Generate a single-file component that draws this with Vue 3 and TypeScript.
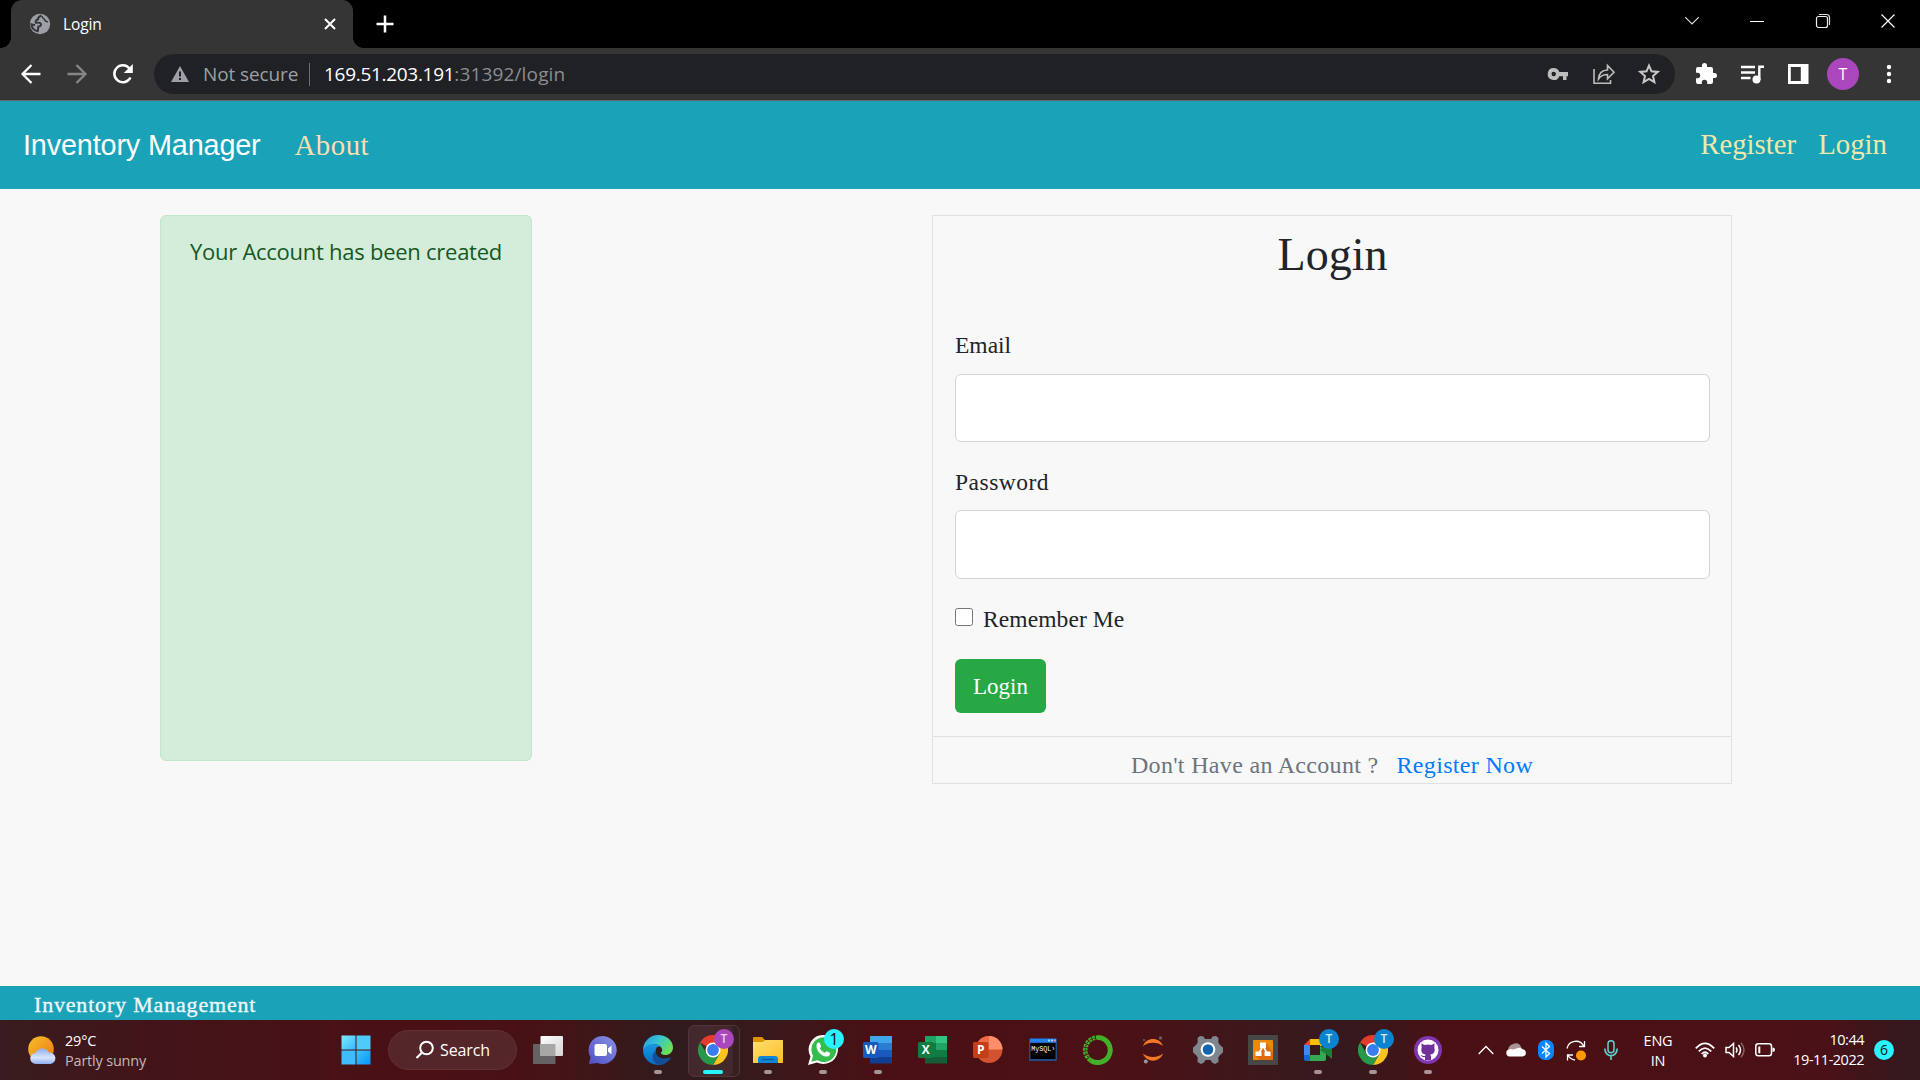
<script setup lang="ts">
import { ref } from 'vue'

interface App {
  name: string
  running?: boolean
  active?: boolean
}

const email = ref('')
const password = ref('')
const remember = ref(false)

const apps: App[] = [
  { name: 'taskview' },
  { name: 'chat' },
  { name: 'edge', running: true },
  { name: 'chrome', active: true },
  { name: 'folder', running: true },
  { name: 'whatsapp', running: true },
  { name: 'word', running: true },
  { name: 'excel' },
  { name: 'powerpoint' },
  { name: 'mysql' },
  { name: 'anaconda' },
  { name: 'jupyter' },
  { name: 'settings' },
  { name: 'drawio' },
  { name: 'meet', running: true },
  { name: 'chrome2', running: true },
  { name: 'github', running: true },
]
</script>

<template>
  <div class="screen">
    <header class="tabs">
      <div class="tab">
        <svg class="globe" width="22" height="22" viewBox="0 0 22 22">
          <circle cx="11" cy="11" r="10.2" fill="#9aa0a6" />
          <path d="M12.500 2.500L8.500 4.500 8 7 5.500 7.500 5 10.200h4.500l2 1.800-.5 2.300-3 .5-.3 4.200C4.500 18 2.300 14.800 2.300 11L5 10.200l.5-2.700L8 7l.5-2.500zM13 2.300c4 .6 6.700 4 6.800 8l-2.600-.6-2.200.3-1.500-1.800.8-1.700-2-1.400zM14 19.300l.3-2.600 2-1.500.2-2.300 3-.3c-.6 3.200-2.500 5.600-5.500 6.700z" fill="#353535" fill-opacity=".0" />
          <path d="M12.500 2.500c-2 .8-3.800 1.800-3.600 4-1.800.3-2.500 1.500-2.100 3.200 2.500-.2 5-.2 5.200 1.500.2 1.600-1 2.200-2.700 2.400-.2 1.600-.2 3-.6 4.600C5 17.500 2.600 15 2.400 11.300l3.600 1" fill="none" stroke="#353535" stroke-width="2" />
          <path d="M13 3c.2 2 1 2.700 2.300 3.200.4 1.700 1.300 2.600 3.600 2.500" fill="none" stroke="#353535" stroke-width="1.500" />
        </svg>
        <span class="tab-title">Login</span>
        <svg width="12" height="12" viewBox="0 0 12 12"><path d="M1 1l10 10M11 1L1 11" stroke="#fff" stroke-width="2" /></svg>
      </div>
      <svg class="plus" width="18" height="18" viewBox="0 0 18 18"><path d="M9 .5v17M.5 9h17" stroke="#fff" stroke-width="2.500" /></svg>
      <div class="window-buttons">
        <svg width="16" height="16" viewBox="0 0 16 16"><path d="M1.200 4.200L8 11l6.800-6.800" fill="none" stroke="#ddd" stroke-width="1.200" /></svg>
        <svg width="16" height="16" viewBox="0 0 16 16"><path d="M1 8.500h14" stroke="#fff" /></svg>
        <svg width="16" height="16" viewBox="0 0 16 16"><rect x="1.500" y="3.500" width="11" height="11" rx="2" fill="none" stroke="#eee" stroke-width="1.200" /><path d="M4 1.500h7.500q3 0 3 3V12" fill="none" stroke="#ddd" stroke-width="1.200" /></svg>
        <svg width="16" height="16" viewBox="0 0 16 16"><path d="M1.500 1.500l13 13m0-13l-13 13" stroke="#fff" stroke-width="1.200" /></svg>
      </div>
    </header>

    <div class="toolbar">
      <svg class="nav-icon" width="22" height="22" viewBox="0 0 22 22"><path d="M20.500 11H3M11.500 2l-9 9 9 9" fill="none" stroke="#fff" stroke-width="2.300" /></svg>
      <svg class="nav-icon" width="22" height="22" viewBox="0 0 22 22"><path d="M1.500 11H19M10.500 2l9 9-9 9" fill="none" stroke="#868686" stroke-width="2.300" /></svg>
      <svg class="nav-icon" width="22" height="22" viewBox="0 0 22 22"><path d="M18.500 14.500A8.500 8.500 0 1 1 17.500 5.500" fill="none" stroke="#fff" stroke-width="2.500" /><path d="M20.800 1v9h-9z" fill="#fff" /></svg>
      <div class="address">
        <svg class="warn" width="18" height="16" viewBox="0 0 18 16"><path d="M9 0l9 16H0z" fill="#9aa0a6" /><path d="M9 5.500v5M9 12v2" stroke="#202124" stroke-width="2" /></svg>
        <span class="insecure">Not secure</span>
        <i class="bar"></i>
        <span class="url"><b>169.51.203.191</b>:31392/login</span>
        <div class="address-icons">
          <svg width="22" height="22" viewBox="0 0 22 22"><path fill-rule="evenodd" d="M6.700 5a6 6 0 1 0 5.600 8.200H16V17h3.500v-3.800H21V9h-8.700A6 6 0 0 0 6.700 5zm0 3.800a2.200 2.200 0 1 1 0 4.400 2.200 2.200 0 0 1 0-4.400z" fill="#bdbdbd" /></svg>
          <svg width="24" height="22" viewBox="0 0 24 22"><path d="M2 6v14.200h16.500V17M6.500 16c.4-5.800 3.300-8.800 9-9V2.500l6.500 6.700-6.500 6.500v-4.200c-4 0-6.800 1.300-9 4.500z" fill="none" stroke="#bdbdbd" stroke-width="1.600" /></svg>
          <svg width="22" height="22" viewBox="0 0 22 22"><path d="M11 2.600l2.500 5.700 6.200.6-4.700 4.100 1.400 6.100L11 15.900l-5.400 3.200L7 13 2.300 8.900l6.200-.6z" fill="none" stroke="#c7c7c7" stroke-width="2" /></svg>
        </div>
      </div>
      <div class="extensions">
        <svg width="24" height="24" viewBox="0 0 24 24"><path fill="#fff" d="M20.500 11H19V7a2 2 0 0 0-2-2h-4V3.500a2.500 2.500 0 0 0-5 0V5H4a2 2 0 0 0-2 2v3.800h1.500a2.700 2.700 0 0 1 0 5.400H2V20a2 2 0 0 0 2 2h3.800v-1.500a2.700 2.700 0 0 1 5.400 0V22H17a2 2 0 0 0 2-2v-4h1.500a2.500 2.500 0 0 0 0-5z" /></svg>
        <svg width="24" height="24" viewBox="0 0 24 24"><path d="M1 5h14M1 10.500h14M1 16h9.500" stroke="#fff" stroke-width="2.300" /><circle cx="16.500" cy="17.500" r="4" fill="#fff" /><path d="M19.300 18V4.700h4.700" fill="none" stroke="#fff" stroke-width="2.400" /></svg>
        <svg width="24" height="24" viewBox="0 0 24 24"><path fill-rule="evenodd" fill="#fff" d="M2 2h20.500v20H2zM4.800 5v14h10V5z" /></svg>
        <span class="avatar">T</span>
        <svg class="dots" width="8" height="22" viewBox="0 0 8 22"><g fill="#fff"><circle cx="4" cy="4" r="2.200" /><circle cx="4" cy="11" r="2.200" /><circle cx="4" cy="18" r="2.200" /></g></svg>
      </div>
    </div>

    <nav class="navbar">
      <span class="brand">Inventory Manager</span>
      <a class="about">About</a>
      <a class="nav-link">Register</a>
      <a class="nav-link">Login</a>
    </nav>

    <main class="page">
      <div class="alert"><span>Your Account has been created</span></div>
      <section class="card">
        <form class="form" @submit.prevent>
          <h1>Login</h1>
          <label class="label email">Email</label>
          <input v-model="email" class="field" type="text" />
          <label class="label password">Password</label>
          <input v-model="password" class="field tall" type="password" />
          <label class="remember"><input v-model="remember" type="checkbox" /><span>Remember Me</span></label>
          <button class="submit">Login</button>
        </form>
        <div class="card-foot"><span>Don't Have an Account ?</span><a>Register Now</a></div>
      </section>
    </main>

    <footer class="footer"><span>Inventory Management</span></footer>

    <div class="taskbar">
      <div class="weather">
        <svg width="30" height="30" viewBox="0 0 30 30">
          <defs>
            <linearGradient id="sun" x1="0" y1="0" x2="1" y2="1"><stop stop-color="#f6c02c" /><stop offset="1" stop-color="#f0760f" /></linearGradient>
            <linearGradient id="cloud" x1="0" y1="0" x2="0" y2="1"><stop stop-color="#8fb0ee" /><stop offset=".6" stop-color="#d9e5fb" /><stop offset="1" stop-color="#8eaef0" /></linearGradient>
          </defs>
          <circle cx="14" cy="14" r="12.800" fill="url(#sun)" />
          <path d="M9 29a5.500 5.500 0 0 1-.5-11A7.500 7.500 0 0 1 22 17.500 5.800 5.800 0 0 1 23.500 29z" fill="url(#cloud)" />
        </svg>
        <div class="weather-text"><span>29°C</span><span class="dim">Partly sunny</span></div>
      </div>
      <svg class="start" width="30" height="30" viewBox="0 0 30 30">
        <defs><linearGradient id="win" x1="0" y1="0" x2="1" y2="1" gradientUnits="objectBoundingBox"><stop stop-color="#7ceaff" /><stop offset="1" stop-color="#39b8fb" /></linearGradient>
          <linearGradient id="win2" x1="0" y1="0" x2="1" y2="1"><stop stop-color="#3dc3fc" /><stop offset="1" stop-color="#0795fb" /></linearGradient></defs>
        <rect x=".5" y=".5" width="14" height="14" fill="url(#win)" /><rect x="15.500" y=".5" width="14" height="14" fill="#4ecbfb" />
        <rect x=".5" y="15.500" width="14" height="14" fill="#3fbdfb" /><rect x="15.500" y="15.500" width="14" height="14" fill="url(#win2)" />
      </svg>
      <div class="search">
        <svg width="20" height="20" viewBox="0 0 20 20"><circle cx="11.500" cy="8" r="6.300" fill="none" stroke="#fff" stroke-width="2" /><path d="M7 12.500l-5.500 5.500" stroke="#fff" stroke-width="2.200" /></svg>
        <span>Search</span>
      </div>

      <div class="apps">
        <div v-for="app in apps" :key="app.name" class="app" :class="{ active: app.active }">
          <svg v-if="app.name === 'taskview'" width="30" height="30" viewBox="0 0 30 30">
            <defs><linearGradient id="tv" x1="0" y1="0" x2="1" y2="1"><stop stop-color="#fff" /><stop offset="1" stop-color="#d5d2d2" /></linearGradient></defs>
            <rect y="9" width="22.500" height="20" rx="1" fill="#656263" /><rect x="7.500" y="1" width="22.500" height="20" rx="1" fill="url(#tv)" /><rect x="7.500" y="9" width="15" height="12" fill="#a9a6a6" />
          </svg>
          <svg v-else-if="app.name === 'chat'" width="30" height="30" viewBox="0 0 30 30">
            <defs><linearGradient id="ch" x1="1" y1="0" x2="0" y2="1"><stop stop-color="#8a92e6" /><stop offset="1" stop-color="#4f4fc4" /></linearGradient></defs>
            <path d="M15 1a14 14 0 1 1-5.500 27L1 29l1.500-7A14 14 0 0 1 15 1z" fill="url(#ch)" />
            <rect x="6.500" y="9" width="12.500" height="12" rx="2" fill="#fff" /><path d="M20 13.500l3.500-3v9l-3.500-3z" fill="#fff" />
          </svg>
          <svg v-else-if="app.name === 'edge'" width="30" height="30" viewBox="0 0 30 30">
            <defs>
              <linearGradient id="e1" x1="0" y1="0" x2="1" y2=".5"><stop stop-color="#2693e0" /><stop offset=".5" stop-color="#36c4d5" /><stop offset="1" stop-color="#6bdf55" /></linearGradient>
              <linearGradient id="e2" x1="0" y1="0" x2="0" y2="1"><stop stop-color="#1897e4" /><stop offset="1" stop-color="#0a69c4" /></linearGradient>
            </defs>
            <path d="M0 15A15 15 0 0 1 15 0c9 0 15 6 15 12.500 0 5-4 7.500-7.500 7.500-3 0-5-1-4.500-2.500 1-1 1.500-2 1-3.500C17 8 6 7 0 15z" fill="url(#e1)" />
            <path d="M0 15C4 7 15 8 18 12c-3-1.500-5.500.5-5.500 4 0 6 6.500 10 15.500 6.500C25 27 20.500 30 15 30A15 15 0 0 1 0 15z" fill="url(#e2)" />
            <path d="M12.500 16c0 6 6.500 10 15.500 6.500C25 27 20.500 30 16 30 9 28 7.500 19 12.500 16z" fill="#124f9b" />
          </svg>
          <svg v-else-if="app.name.startsWith('chrome')" width="30" height="30" viewBox="0 0 30 30">
            <path d="M15 15L2 7.500A15 15 0 0 1 28 7.500z" fill="#e33b2e" /><path d="M15 7.500h13A15 15 0 0 1 15 30l6.500-11.200z" fill="#fcc31e" />
            <path d="M2 7.500l6.500 11.300h13L15 30A15 15 0 0 1 2 7.500z" fill="#28994a" /><circle cx="15" cy="15" r="7.500" fill="#fff" /><circle cx="15" cy="15" r="5.900" fill="#3a7df0" />
          </svg>
          <svg v-else-if="app.name === 'folder'" width="30" height="30" viewBox="0 0 30 30">
            <defs><linearGradient id="fo" x1="0" y1="0" x2="1" y2="1"><stop stop-color="#ffdf75" /><stop offset="1" stop-color="#fdbe1d" /></linearGradient></defs>
            <path d="M0 3q0-1 1-1h8l3 3h17q1 0 1 1v8H0z" fill="#dc9605" /><path d="M0 7h9.500l3-2H29q1 0 1 1v22H0z" fill="url(#fo)" />
            <path d="M5 28v-4q0-3 3-3h14q3 0 3 3v4z" fill="#1285d4" /><path d="M9 24.500h12" stroke="#075ca0" stroke-width="1.300" />
          </svg>
          <svg v-else-if="app.name === 'whatsapp'" width="30" height="30" viewBox="0 0 30 30">
            <path d="M15.500 0A14.500 14.500 0 1 1 9 27.500L0 30l2.500-8.500A14.500 14.500 0 0 1 15.500 0z" fill="#fff" />
            <path d="M15.500 2.200a12.400 12.400 0 1 1-6 23L3.300 26.800 5 20.800A12.400 12.400 0 0 1 15.500 2.200z" fill="#34bd4c" />
            <path d="M9 8.500c1-1.500 2.500-1.500 3 0l1 2.700c0 1-1 1.400-1.200 2.100 1.200 2.200 2.800 3.600 5 4.500.7-.3 1.200-1.600 2-1.600l3 1.500c1 .8 0 3-1.500 3.500-6 2-14-6.500-11.300-12.700z" fill="#fff" />
          </svg>
          <svg v-else-if="app.name === 'word'" width="30" height="30" viewBox="0 0 30 30">
            <path d="M7 1h22v7H7z" fill="#41a5ee" /><path d="M7 8h22v7H7z" fill="#2b7cd3" /><path d="M7 15h22v7H7z" fill="#185abd" /><path d="M7 22h22v6.500H7z" fill="#103f91" />
            <rect y="7" width="15.500" height="16" rx="1.500" fill="#185abd" /><text x="7.700" y="19" text-anchor="middle" class="letter">W</text>
          </svg>
          <svg v-else-if="app.name === 'excel'" width="30" height="30" viewBox="0 0 30 30">
            <path d="M7 1h11v7H7z" fill="#21a366" /><path d="M18 1h11v7H18z" fill="#33c481" /><path d="M7 8h11v7H7z" fill="#107c41" /><path d="M18 8h11v7H18z" fill="#21a366" /><path d="M7 15h22v7H7z" fill="#107c41" /><path d="M7 22h22v6.500H7z" fill="#185c37" />
            <rect y="7" width="15.500" height="16" rx="1.500" fill="#107c41" /><text x="7.700" y="19.300" text-anchor="middle" class="letter">X</text>
          </svg>
          <svg v-else-if="app.name === 'powerpoint'" width="30" height="30" viewBox="0 0 30 30">
            <circle cx="16" cy="14.500" r="13.500" fill="#d35230" /><path d="M2.500 14.500A13.500 13.500 0 0 1 16 1v13.500z" fill="#ed6c47" /><path d="M16 1a13.500 13.500 0 0 1 13.500 13.500H16z" fill="#ff8f6b" />
            <rect y="7" width="15.500" height="16" rx="1.500" fill="#c43e1c" /><text x="7.700" y="19.300" text-anchor="middle" class="letter">P</text>
          </svg>
          <svg v-else-if="app.name === 'mysql'" width="30" height="30" viewBox="0 0 30 30">
            <rect x="1" y="3" width="28" height="23" rx="1.500" fill="#234b85" /><path d="M2 4h26v3.500H2z" fill="#2482ed" /><path d="M20 4.500h2v2h-2zM23 4.500h2v2h-2z" fill="#a9d2fa" /><path d="M26 4.500h2v2h-2z" fill="#e98873" /><path d="M2.500 8h25v16h-25z" fill="#020202" />
            <text x="3.200" y="15.500" class="console" textLength="24" lengthAdjust="spacingAndGlyphs">MySQL›</text>
          </svg>
          <svg v-else-if="app.name === 'anaconda'" width="30" height="30" viewBox="0 0 30 30">
            <path d="M15 2.500a12.500 12.500 0 1 1-7.500 22.700" fill="none" stroke="#43b02a" stroke-width="5" />
            <path d="M7.500 25.200A12.500 12.500 0 0 1 15 2.500" fill="none" stroke="#43b02a" stroke-width="4.500" stroke-dasharray="2.800 .9" />
            <path d="M5.500 22.500A11.500 11.500 0 0 1 13 3" fill="none" stroke="#4a1116" stroke-width="1" stroke-dasharray="1.700 2.200" />
          </svg>
          <svg v-else-if="app.name === 'jupyter'" width="30" height="30" viewBox="0 0 30 30">
            <path d="M5 11C8 1.500 22 1.500 25 11 20 6.500 10 6.500 5 11zM5 18.500c3 9.500 17 9.500 20 0-5 4.500-15 4.500-20 0z" fill="#f37726" /><circle cx="22.500" cy="3" r="1.700" fill="#6c5d5e" /><circle cx="6" cy="5" r="1.100" fill="#6c5d5e" /><circle cx="7.800" cy="26.500" r="2" fill="#989798" />
          </svg>
          <svg v-else-if="app.name === 'settings'" width="30" height="30" viewBox="0 0 30 30">
            <path d="M7 1l3.500.5L12 4h6l1.500-2.500L23 1l2.500 2-.2 4.500L27 10l3 2.500v5L27 20l-1.700 2.500.2 4.500-3.500 2-3-1.500L17.500 25h-5L11 27.500 8 29l-3.500-2 .2-4.500L3 20l-3-2.500v-5L3 10l1.700-2.500L4.500 3z" fill="#7f868e" />
            <circle cx="15" cy="14.500" r="7.300" fill="#fff" /><circle cx="15" cy="14.500" r="5.300" fill="#1464ad" />
          </svg>
          <svg v-else-if="app.name === 'drawio'" width="30" height="30" viewBox="0 0 30 30">
            <path d="M0 0h30v30H0z" fill="#474747" /><rect x="5" y="5" width="20" height="20" rx="1" fill="#f08705" /><path d="M18 8l7 9v8H12l-4-4z" fill="#df6c0c" />
            <path d="M15 11l-4.500 8M15 11l4.500 8" stroke="#fff" stroke-width="1.600" /><path d="M12 7.500h6v5.500h-6zM7.500 16.500h6V21h-6zM16.500 16.500h6V21h-6z" fill="#fff" />
          </svg>
          <svg v-else-if="app.name === 'meet'" width="30" height="30" viewBox="0 0 30 30">
            <path d="M7 4h14q2 0 2 2v5h-6v-1H7z" fill="#fbbc04" /><path d="M7 4v6H1z" fill="#ea4335" /><path d="M1 10h6v10H1z" fill="#4285f4" /><path d="M1 20h6v6H3q-2 0-2-2z" fill="#1967d2" /><path d="M7 20h10v-9l6 4v9q0 2-2 2H7z" fill="#34a853" /><path d="M17 15l7-6 5-3v18l-6-5z" fill="#188038" />
          </svg>
          <svg v-else width="30" height="30" viewBox="0 0 30 30">
            <circle cx="15" cy="15" r="14" fill="#8136ad" /><circle cx="15" cy="15" r="10.500" fill="#fff" />
            <path d="M12 25v-3c-3 .8-3.500-1.500-4.500-2 1.500-.3 2 1.500 4.500 1l.7-1.500C8.500 19 7.700 16 8.700 12.500l-.3-4 3.400 1.500q3.200-.8 6.400 0l3.400-1.500-.3 4c1 3.500.2 6.500-4 7l.8 2V25z" fill="#70309a" />
          </svg>
          <span v-if="app.name === 'chrome'" class="badge purple">T</span>
          <span v-else-if="app.name === 'meet' || app.name === 'chrome2'" class="badge blue">T</span>
          <span v-else-if="app.name === 'whatsapp'" class="badge cyan">1</span>
          <i v-if="app.running || app.active" class="indicator"></i>
        </div>
      </div>

      <div class="tray">
        <svg class="caret" width="16" height="10" viewBox="0 0 16 10"><path d="M.7 9L8 1.500 15.300 9" fill="none" stroke="#fff" stroke-width="1.300" /></svg>
        <svg class="onedrive" width="20" height="14" viewBox="0 0 20 14"><path d="M3 10a6 6 0 0 1 4-9c4-2 7 0 8 3l2 3z" fill="#a99395" /><path d="M3.500 13.500A3.500 3.500 0 0 1 3 6.600q2-1 4 0l5-1.500q2-1 4 1 4 .5 4 4-.4 3.200-3.500 3.400z" fill="#fff" /></svg>
        <svg class="bluetooth" width="16" height="20" viewBox="0 0 16 20"><rect width="16" height="20" rx="7" fill="#0a84ff" /><path d="M4 6.500l7.500 7L8 17V3l3.500 3.500-7.500 7" fill="none" stroke="#fff" stroke-width="1.300" /></svg>
        <svg class="sync" width="21" height="21" viewBox="0 0 21 21"><path d="M1 8.500A9 9 0 0 1 18 6.500M18.500 1v5.500H13M9 20c-3-.4-5.500-2-7-4.500M1.500 20.500V15h5.500" fill="none" stroke="#fff" stroke-width="1.300" /><circle cx="15" cy="15.500" r="5" fill="#ff9800" /></svg>
        <svg class="mic" width="14" height="20" viewBox="0 0 14 20"><rect x="4" y=".8" width="6" height="12" rx="3" fill="none" stroke="#63d2cf" stroke-width="1.500" /><path d="M.8 8.500c0 9.500 12.400 9.500 12.400 0M7 15.500V20" fill="none" stroke="#63d2cf" stroke-width="1.600" /></svg>
        <div class="lang"><span>ENG</span><span>IN</span></div>
        <svg class="wifi" width="20" height="16" viewBox="0 0 20 16"><g fill="none" stroke="#fff" stroke-width="1.800"><path d="M.8 6.300q9.200-10 18.400 0M3.800 9.300q6.200-6.500 12.400 0M6.700 12q3.300-3.500 6.600 0" /></g><circle cx="10" cy="13.500" r="2" fill="#fff" /></svg>
        <svg class="volume" width="20" height="16" viewBox="0 0 20 16"><g fill="none" stroke="#fff" stroke-width="1.500"><path d="M1 5.500h3l4.500-4v13l-4.500-4H1zM11 5.500q2 2.500 0 5M13.500 3q4 5 0 10" /><path d="M16 .8q6 7.200 0 14.400" stroke="#856264" /></g></svg>
        <svg class="battery" width="20" height="14" viewBox="0 0 20 14"><rect x=".8" y=".8" width="15.700" height="12" rx="2.500" fill="none" stroke="#fff" stroke-width="1.500" /><path d="M3.300 3.500h2v6.700h-2zM17.500 4.500q2.500 0 2.500 2.300t-2.500 2.300z" fill="#fff" /></svg>
        <div class="clock"><span>10:44</span><span>19-11-2022</span></div>
        <span class="notice">6</span>
      </div>
    </div>
  </div>
</template>

<style>
body { margin: 0; overflow: hidden; }
</style>

<style scoped>
* { box-sizing: border-box; }
svg { display: block; flex: none; }
.screen { width: 1920px; height: 1080px; display: flex; flex-direction: column; background: #f8f8f8; font-family: "Open Sans", "Noto Sans", sans-serif; white-space: nowrap; overflow: hidden; }

.tabs { height: 48px; display: flex; align-items: center; background: #000; padding-left: 11px; flex: none; }
.tab { position: relative; width: 342px; height: 48px; background: #353535; border-radius: 11px 11px 0 0; display: flex; align-items: center; padding: 0 17px 0 18px; }
.tab::before, .tab::after { content: ""; position: absolute; bottom: 0; width: 10px; height: 10px; }
.tab::before { left: -10px; background: radial-gradient(circle at 0 0, #000 9.500px, #353535 10px); }
.tab::after { right: -10px; background: radial-gradient(circle at 100% 0, #000 9.500px, #353535 10px); }
.tab-title { flex: 1; margin-left: 12px; color: #fff; font-size: 15.500px; letter-spacing: -.1px; }
.plus { margin-left: 23px; }
.window-buttons { margin: -6px 24px 0 auto; display: flex; gap: 49.500px; }

.toolbar { height: 53px; flex: none; background: #353535; border-bottom: 1px solid #666; display: flex; align-items: center; padding: 0 27px 0 20px; }
.nav-icon { margin-right: 24px; }
.address { width: 1522px; height: 40px; margin-left: -4px; border-radius: 20px; background: #202124; display: flex; align-items: center; padding: 0 15px 0 17px; font-size: 19px; color: #9aa0a6; }
.insecure { width: 95px; margin-left: 14px; letter-spacing: -.1px; }
.bar { width: 1px; height: 23px; margin: 0 14px 0 11px; background: #6d6f73; }
.url { color: #8b8e92; letter-spacing: .15px; }
.url b { color: #fff; font-weight: 400; letter-spacing: -.3px; }
.address-icons { margin-left: auto; display: flex; gap: 22.500px; align-items: center; }
.extensions { flex: 1; display: flex; align-items: center; padding-left: 19px; }
.extensions > * + * { margin-left: 22px; }
.extensions .avatar { flex: none; width: 32px; height: 32px; margin-left: 17px; border-radius: 50%; background: #ab47bc; color: #fff; font-size: 16px; line-height: 32px; text-align: center; }
.extensions .dots { margin-left: 26px; }

.navbar { height: 88px; flex: none; background: #19a2b8; display: flex; align-items: center; padding: 0 33px 1px 23px; font-size: 28.800px; }
.brand { font-family: "Liberation Sans", Arial, sans-serif; color: #fff; letter-spacing: -.15px; padding-top: 1px; }
.about { margin-left: 34px; margin-right: auto; font-family: "Liberation Serif", serif; color: #ffdead; letter-spacing: .5px; padding-top: 1px; }
.nav-link { font-family: "Liberation Serif", serif; color: #eee8aa; }
.nav-link + .nav-link { margin-left: 22px; }

.page { flex: 1; display: flex; align-items: flex-start; padding: 26px 188px 0 160px; }
.alert { width: 372px; height: 546px; border: 1px solid #c3e6cb; border-radius: 6px; background: #d4edda; color: #155724; text-align: center; font-size: 22px; letter-spacing: -.26px; line-height: 34px; padding-top: 18px; }
.card { width: 800px; height: 569px; margin-left: auto; border: 1px solid #dee2e6; font-family: "Liberation Serif", serif; color: #212529; }
.form { height: 521px; border-bottom: 1px solid #dee2e6; padding: 0 21px 0 22px; display: flex; flex-direction: column; align-items: stretch; }
h1 { margin: 13px 0 0; font-size: 46px; line-height: 52px; font-weight: 400; text-align: center; }
.label { height: 30px; line-height: 30px; font-size: 23.500px; }
.email { margin: 49px 0 14px; }
.password { margin: 25px 0 13px; letter-spacing: .5px; }
.field { width: 100%; height: 68px; border: 1px solid #ced4da; border-radius: 6px; background: #fff; flex: none; outline: 0; padding: 0 18px; font-size: 23px; }
.field.tall { height: 69px; }
.remember { margin-top: 23px; height: 34px; display: flex; align-items: center; font-size: 23.500px; letter-spacing: .1px; }
.remember input { width: 18px; height: 18px; margin: 0 10px 5px 0; }
.submit { width: 91px; height: 54px; margin-top: 23px; border: 0; border-radius: 6px; background: #28a745; color: #fff; font: 23px "Liberation Serif", serif; padding: 1px 0 0; }
.card-foot { display: flex; justify-content: center; gap: 18px; font-size: 24px; line-height: 56px; letter-spacing: .32px; color: #6c757d; height: 46px; }
.card-foot a { color: #007bff; }

.footer { height: 34px; flex: none; background: #19a2b8; padding-left: 34px; color: #f0f8fa; font: 22px/37px "Liberation Serif", serif; letter-spacing: .82px; -webkit-text-stroke: .35px #f0f8fa; }

.taskbar { height: 60px; flex: none; display: flex; align-items: center; color: #fff; background: linear-gradient(90deg, #381c1f 0, #421419 150px, #4a1014 420px, #471215 540px, #311b1d 670px, #3a181b 780px, #4a1014 880px, #4a1116 1130px, #3c181c 1260px, #35191d 1350px, #4a1014 1450px, #4a1116 1820px, #32191e 1920px); }
.weather { width: 312px; display: flex; padding-left: 27px; align-items: center; }
.weather-text { display: flex; flex-direction: column; margin-left: 8px; font-size: 14.500px; line-height: 20px; letter-spacing: -.2px; padding-top: 1px; }
.dim { color: #c5b7b9; letter-spacing: -.2px; }
.start { margin-left: 28.500px; }
.search { width: 129px; height: 40px; margin-left: 17.500px; border: 1px solid #633034; border-radius: 20px; background: #54262a; display: flex; align-items: center; padding-left: 26px; gap: 5px; font-size: 16px; letter-spacing: -.1px; }
.apps { display: flex; margin-left: 3px; }
.app { position: relative; width: 55px; height: 60px; display: flex; align-items: center; justify-content: center; }
.app > svg { position: relative; }
.active::before { content: ""; position: absolute; left: 3px; top: 5px; width: 50px; height: 50px; border-radius: 6px; background: #43292c; border: 1px solid #503639; box-shadow: inset -6px 0 #362023; }
.indicator { position: absolute; left: 24px; top: 50px; width: 8px; height: 4px; border-radius: 2px; background: #a79496; }
.active .indicator { left: 18px; width: 20px; background: #27f4ff; }
.badge { position: absolute; left: 29px; top: 9px; width: 20px; height: 20px; border-radius: 50%; text-align: center; font-size: 12px; font-weight: 600; line-height: 20px; color: #d5e6ee; }
.purple { background: #ab47bc; color: #ead0ee; }
.blue { background: #0b84cf; }
.cyan { background: #27f4ff; color: #101010; font-size: 16px; font-weight: 400; }
.letter { fill: #fff; font: 700 12px "Open Sans", sans-serif; }
.console { fill: #fff; font: 7px "Liberation Mono", monospace; }

.tray { flex: 1; height: 60px; display: flex; align-items: center; padding-left: 23px; }
.onedrive { margin-left: 12px; }
.bluetooth { margin-left: 12px; }
.sync { margin-left: 12px; }
.mic { margin-left: 17px; }
.lang { width: 32px; margin: 0 21px 0 24px; padding-top: 1px; display: flex; flex-direction: column; align-items: center; font-size: 14.500px; line-height: 20px; letter-spacing: -.2px; }
.volume { margin-left: 10px; }
.battery { margin-left: 10px; }
.clock { width: 89px; display: flex; flex-direction: column; align-items: flex-end; font-size: 14.500px; line-height: 20px; letter-spacing: -.5px; }
.notice { width: 20px; height: 20px; margin-left: 10px; border-radius: 50%; background: #27f4ff; color: #151515; text-align: center; font-size: 14px; line-height: 20px; }
</style>
